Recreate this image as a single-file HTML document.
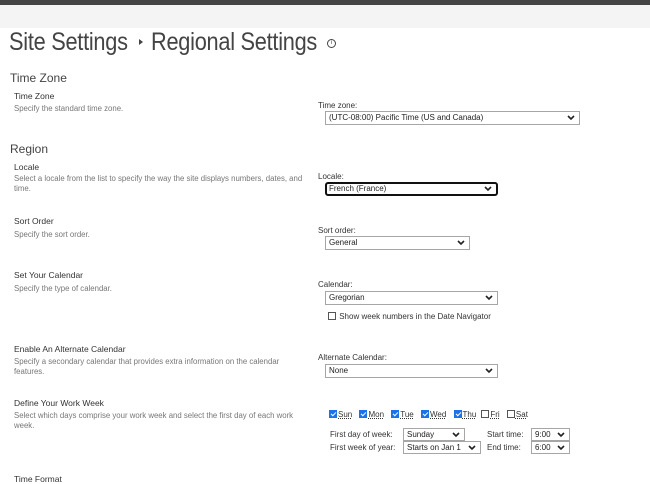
<!DOCTYPE html>
<html><head><meta charset="utf-8"><style>
*{margin:0;padding:0;box-sizing:border-box}
body{width:650px;height:482px;overflow:hidden;background:#fff;font-family:"Liberation Sans",sans-serif;position:relative;color:#333}
.a{position:absolute;white-space:nowrap}
.h1{font-size:25px;color:#444;letter-spacing:-0.3px;transform:scaleX(0.87);transform-origin:0 0}
.h2{font-size:12px;color:#444}
.lb{font-size:8.5px;color:#333}
.d{font-size:7.8px;color:#777;white-space:normal;line-height:10px}
.f{font-size:8px;color:#333}
.s{position:absolute;border:1px solid #a6a6a6;height:14px;font-size:8px;line-height:12px;padding-left:3px;color:#222;background:#fff}
.s svg{position:absolute;right:4px;top:3px}
.cb{display:inline-block;width:8px;height:8px;border:1px solid #555;vertical-align:-1px;margin-right:1px;position:relative}
.ck{background:#1a73e8;border-color:#1a73e8}
.ck:after{content:"";position:absolute;left:2px;top:0px;width:2px;height:4px;border:solid #fff;border-width:0 1.3px 1.3px 0;transform:rotate(45deg)}
.u{text-decoration:underline dotted;margin-right:5px}
</style></head><body>
<div class="a" style="left:0;top:0;width:650px;height:5px;background:#444"></div>
<div class="a" style="left:0;top:5px;width:650px;height:23px;background:#f4f4f4"></div>
<div class="a h1" style="left:9px;top:28px">Site Settings</div>
<div class="a" style="left:139px;top:39px;width:0;height:0;border-left:4px solid #444;border-top:3px solid transparent;border-bottom:3px solid transparent"></div>
<div class="a h1" style="left:151px;top:28px">Regional Settings</div>
<div class="a" style="left:327px;top:39px;width:9px;height:9px;border:1px solid #444;border-radius:50%;font-size:6px;line-height:7px;text-align:center;color:#444">i</div>

<div class="a h2" style="left:10px;top:71px">Time Zone</div>
<div class="a lb" style="left:14px;top:91px">Time Zone</div>
<div class="a d" style="left:14px;top:104px">Specify the standard time zone.</div>
<div class="a f" style="left:318px;top:101px">Time zone:</div>
<div class="s" style="left:325px;top:111px;width:255px">(UTC-08:00) Pacific Time (US and Canada)<svg width="8" height="6"><path d="M1 1l3 3 3-3" stroke="#222" stroke-width="1.6" fill="none"/></svg></div>

<div class="a h2" style="left:10px;top:142px">Region</div>
<div class="a lb" style="left:14px;top:162px">Locale</div>
<div class="a d" style="left:14px;top:174px;width:290px">Select a locale from the list to specify the way the site displays numbers, dates, and time.</div>
<div class="a f" style="left:318px;top:172px">Locale:</div>
<div class="s" style="left:325px;top:182px;width:173px;border:2px solid #111;border-radius:3px;line-height:10px;padding-left:2px">French (France)<svg width="8" height="6" style="top:2px"><path d="M1 1l3 3 3-3" stroke="#222" stroke-width="1.6" fill="none"/></svg></div>

<div class="a lb" style="left:14px;top:216px">Sort Order</div>
<div class="a d" style="left:14px;top:230px">Specify the sort order.</div>
<div class="a f" style="left:318px;top:226px">Sort order:</div>
<div class="s" style="left:325px;top:236px;width:145px">General<svg width="8" height="6"><path d="M1 1l3 3 3-3" stroke="#222" stroke-width="1.6" fill="none"/></svg></div>

<div class="a lb" style="left:14px;top:270px">Set Your Calendar</div>
<div class="a d" style="left:14px;top:284px">Specify the type of calendar.</div>
<div class="a f" style="left:318px;top:280px">Calendar:</div>
<div class="s" style="left:325px;top:291px;width:173px">Gregorian<svg width="8" height="6"><path d="M1 1l3 3 3-3" stroke="#222" stroke-width="1.6" fill="none"/></svg></div>
<div class="a f" style="left:328px;top:312px"><span class="cb"></span> Show week numbers in the Date Navigator</div>

<div class="a lb" style="left:14px;top:344px">Enable An Alternate Calendar</div>
<div class="a d" style="left:14px;top:357px;width:285px">Specify a secondary calendar that provides extra information on the calendar features.</div>
<div class="a f" style="left:318px;top:353px">Alternate Calendar:</div>
<div class="s" style="left:325px;top:364px;width:173px">None<svg width="8" height="6"><path d="M1 1l3 3 3-3" stroke="#222" stroke-width="1.6" fill="none"/></svg></div>

<div class="a lb" style="left:14px;top:398px">Define Your Work Week</div>
<div class="a d" style="left:14px;top:411px;width:285px">Select which days comprise your work week and select the first day of each work week.</div>
<div class="a f" style="left:329px;top:410px"><span class="cb ck"></span><span class="u">Sun</span> <span class="cb ck"></span><span class="u">Mon</span> <span class="cb ck"></span><span class="u">Tue</span> <span class="cb ck"></span><span class="u">Wed</span> <span class="cb ck"></span><span class="u">Thu</span><span class="cb"></span><span class="u">Fri</span> <span class="cb"></span><span class="u">Sat</span></div>
<div class="a f" style="left:330px;top:430px">First day of week:</div>
<div class="s" style="left:403px;top:428px;width:62px;height:13px;line-height:11px">Sunday<svg width="8" height="6"><path d="M1 1l3 3 3-3" stroke="#222" stroke-width="1.6" fill="none"/></svg></div>
<div class="a f" style="left:487px;top:430px">Start time:</div>
<div class="s" style="left:531px;top:428px;width:39px;height:13px;line-height:11px">9:00<svg width="8" height="6"><path d="M1 1l3 3 3-3" stroke="#222" stroke-width="1.6" fill="none"/></svg></div>
<div class="a f" style="left:330px;top:443px">First week of year:</div>
<div class="s" style="left:403px;top:441px;width:78px;height:13px;line-height:11px">Starts on Jan 1<svg width="8" height="6"><path d="M1 1l3 3 3-3" stroke="#222" stroke-width="1.6" fill="none"/></svg></div>
<div class="a f" style="left:487px;top:443px">End time:</div>
<div class="s" style="left:531px;top:441px;width:39px;height:13px;line-height:11px">6:00<svg width="8" height="6"><path d="M1 1l3 3 3-3" stroke="#222" stroke-width="1.6" fill="none"/></svg></div>

<div class="a lb" style="left:14px;top:474px">Time Format</div>
</body></html>
